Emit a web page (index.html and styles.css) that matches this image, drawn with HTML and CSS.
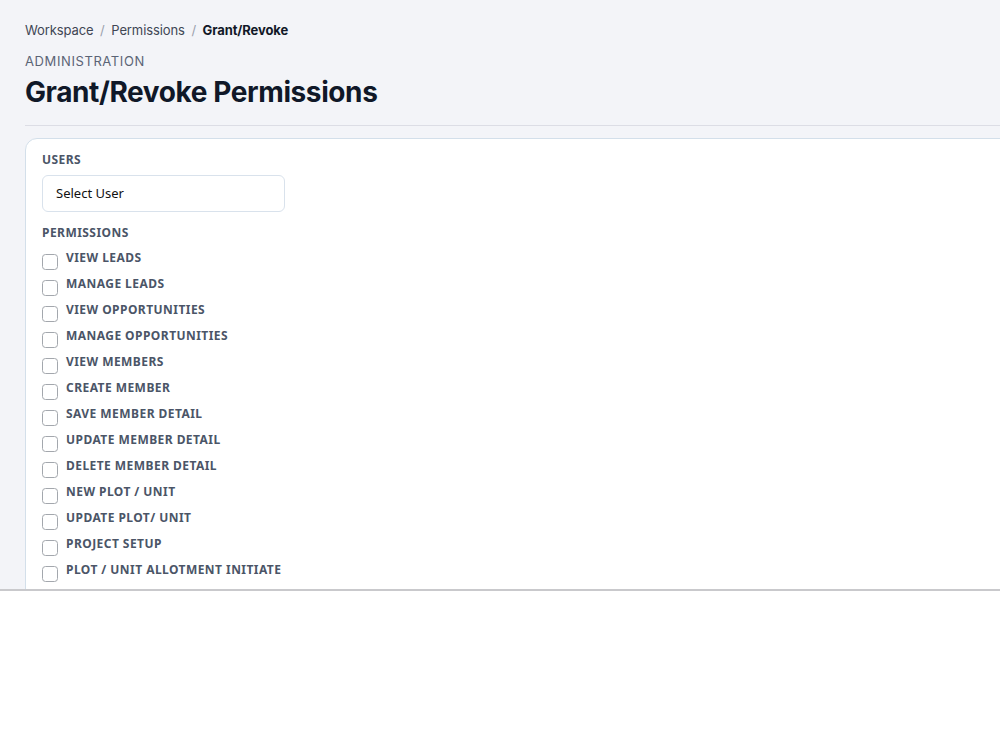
FILE: index.html
```html
<!DOCTYPE html>
<html lang="en">
  <head>
    <meta charset="UTF-8" />
    <meta name="viewport" content="width=device-width, initial-scale=1.0" />
    <title>Grant/Revoke Permissions</title>
    <link rel="stylesheet" href="styles.css">
  </head>
  <body>
    <div class="page">
      <div class="breadcrumb">
        <span>Workspace</span>
        <span class="sep">/</span>
        <span>Permissions</span>
        <span class="sep">/</span>
        <span class="current">Grant/Revoke</span>
      </div>
      <p class="eyebrow">ADMINISTRATION</p>
      <h1 class="title">Grant/Revoke Permissions</h1>
      <hr class="divider" />

      <div class="card">
        <label class="field-label" for="userSelect">USERS</label>
        <div class="select-box" id="userSelect">Select User</div>

        <div class="field-label">PERMISSIONS</div>
        <ul class="perm-list">
          <li><span class="check"></span>VIEW LEADS</li>
          <li><span class="check"></span>MANAGE LEADS</li>
          <li><span class="check"></span>VIEW OPPORTUNITIES</li>
          <li><span class="check"></span>MANAGE OPPORTUNITIES</li>
          <li><span class="check"></span>VIEW MEMBERS</li>
          <li><span class="check"></span>CREATE MEMBER</li>
          <li><span class="check"></span>SAVE MEMBER DETAIL</li>
          <li><span class="check"></span>UPDATE MEMBER DETAIL</li>
          <li><span class="check"></span>DELETE MEMBER DETAIL</li>
          <li><span class="check"></span>NEW PLOT / UNIT</li>
          <li><span class="check"></span>UPDATE PLOT/ UNIT</li>
          <li><span class="check"></span>PROJECT SETUP</li>
          <li><span class="check"></span>PLOT / UNIT ALLOTMENT INITIATE</li>
        </ul>
      </div>
    </div>
  </body>
</html>
```

FILE: styles.css
```css
body {
  margin: 0;
  padding: 0;
  background: #ffffff;
  font-family: Inter, "Noto Sans", sans-serif;
}

/* Gray app area, cut off at the bottom */
.page {
  height: 591px;
  box-sizing: border-box;
  padding: 21px 0 0 25px;
  background: #f3f4f8;
  border-bottom: 2px solid #c9c9cc;
  overflow: hidden;
}

.breadcrumb {
  font-size: 13px;
  line-height: 18px;
  letter-spacing: -0.1px;
  color: #3f4654;
}

.breadcrumb .sep {
  color: #9aa1ad;
  margin: 0 3px;
}

.breadcrumb .current {
  color: #111827;
  font-weight: 700;
}

.eyebrow {
  margin: 13px 0 0 0;
  font-size: 13px;
  line-height: 18px;
  letter-spacing: 0.6px;
  color: #5b6476;
}

.title {
  margin: 4px 0 0 0;
  font-size: 28px;
  line-height: 36px;
  font-weight: 700;
  letter-spacing: -0.4px;
  color: #101828;
}

.divider {
  margin: 15px 0 0 0;
  border: none;
  border-top: 1px solid #dcdde5;
}

/* Card */
.card {
  margin: 12px -20px 0 0;
  padding: 13px 16px 20px 16px;
  background: #ffffff;
  border: 1px solid #d3dfea;
  border-radius: 12px 0 0 0;
  font-family: "Noto Sans", sans-serif;
}

.field-label {
  display: block;
  font-size: 12px;
  line-height: 16px;
  font-weight: 700;
  letter-spacing: 0.45px;
  color: #4b5567;
}

.select-box {
  width: 243px;
  height: 37px;
  box-sizing: border-box;
  margin: 7px 0 13px 0;
  padding: 0 13px;
  border: 1px solid #d9e2ec;
  border-radius: 6px;
  font-size: 13px;
  line-height: 35px;
  color: #111111;
}

.perm-list {
  list-style: none;
  margin: 9px 0 0 0;
  padding: 0;
}

.perm-list li {
  display: flex;
  align-items: flex-start;
  height: 26px;
  font-size: 12px;
  line-height: 16px;
  font-weight: 700;
  letter-spacing: 0.45px;
  color: #4b5567;
}

.check {
  width: 14px;
  height: 14px;
  margin: 4px 8px 0 0;
  border: 1px solid #a3a7ad;
  border-radius: 3.5px;
  background: #ffffff;
  flex-shrink: 0;
}
```
